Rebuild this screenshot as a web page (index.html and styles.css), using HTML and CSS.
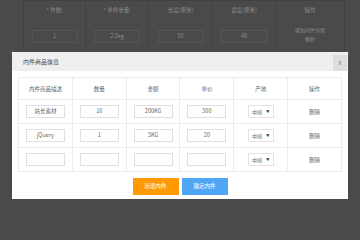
FILE: index.html
```html
<!DOCTYPE html>
<html lang="zh">
<head>
<meta charset="utf-8">
<title>内件商品信息</title>
<link rel="stylesheet" href="styles.css">
</head>
<body>
<div class="page">
  <div class="col"><div class="bh">* 件数:</div><div class="bin">1</div></div>
  <div class="col"><div class="bh">* 单件重量:</div><div class="bin">2.5kg</div></div>
  <div class="col"><div class="bh">长度(厘米)</div><div class="bin">50</div></div>
  <div class="col"><div class="bh">宽度(厘米)</div><div class="bin">40</div></div>
  <div class="col"><div class="bh">操作</div><div class="bops"><span>增加内件详情</span><span>删除</span></div></div>
</div>
<div class="mask-marks"><span>设</span><span>置</span></div>
<div class="dialog">
  <div class="dlg-title"><span>内件商品信息</span><span class="dlg-close">x</span></div>
  <div class="dlg-body">
    <table class="grid">
      <tr class="head"><td>内件商品描述</td><td>数量</td><td>金额</td><td>单价</td><td>产地</td><td>操作</td></tr>
      <tr><td><span class="box">站长素材</span></td><td><span class="box">10</span></td><td><span class="box">200KG</span></td><td><span class="box">500</span></td><td><span class="sel">中国<i>▼</i></span></td><td class="op">删除</td></tr>
      <tr><td><span class="box">jQuery</span></td><td><span class="box">1</span></td><td><span class="box">5KG</span></td><td><span class="box">20</span></td><td><span class="sel">中国<i>▼</i></span></td><td class="op">删除</td></tr>
      <tr><td><span class="box"></span></td><td><span class="box"></span></td><td><span class="box"></span></td><td><span class="box"></span></td><td><span class="sel">中国<i>▼</i></span></td><td class="op">删除</td></tr>
    </table>
    <div class="btns"><span class="btn orange">新增内件</span><span class="btn blue">确定内件</span></div>
  </div>
</div>
</body>
</html>
```
FILE: styles.css
```css
html, body {
  margin: 0;
  padding: 0;
}
body {
  width: 360px;
  height: 213px;
  overflow: hidden;
  position: relative;
  background: #4a4a4a;
  font-family: "Noto Sans CJK SC", "Liberation Sans", sans-serif;
}
.page {
  display: grid;
  grid-template-columns: 62px 63px 64px 63px 70px;
  margin-left: 23px;
  width: 323px;
  height: 50px;
  border-top: 1px solid #424242;
}
.col {
  border-left: 1px solid #424242;
  display: flex;
  flex-direction: column;
  align-items: center;
  padding-top: 6px;
}
.col:last-child {
  border-right: 1px solid #424242;
}
.bh {
  font-size: 5.5px;
  line-height: 7px;
  color: #8c8c8c;
}
.bin {
  margin-top: 16px;
  width: 44px;
  height: 11px;
  border: 1px solid #565656;
  font-size: 5.5px;
  line-height: 11px;
  text-align: center;
  color: #8c8c8c;
}
.bops {
  margin-top: 12px;
  display: flex;
  flex-direction: column;
  align-items: center;
  gap: 2px;
  font-size: 5px;
  line-height: 7px;
  color: #8c8c8c;
}
.mask-marks {
  display: flex;
  justify-content: space-between;
  padding: 0 10px;
  font-size: 4px;
  line-height: 4px;
  color: #6a6a6a;
}
.dialog {
  position: absolute;
  left: 12px;
  top: 52px;
  width: 336px;
  height: 147px;
  background: #fff;
  display: flex;
  flex-direction: column;
}
.dlg-title {
  height: 19px;
  background: #efefef;
  display: flex;
  justify-content: space-between;
  align-items: flex-end;
  padding-left: 11px;
  font-size: 6px;
  color: #444;
}
.dlg-title > span:first-child {
  line-height: 19px;
}
.dlg-close {
  width: 14px;
  height: 16px;
  margin-right: 1px;
  background: #dedede;
  color: #777;
  font-size: 6px;
  line-height: 16px;
  text-align: center;
}
.dlg-body {
  padding: 6px 6px 0;
}
.grid {
  width: 324px;
  border-collapse: collapse;
  table-layout: fixed;
}
.grid td {
  border: 1px solid #ececec;
  height: 23px;
  padding: 0;
  text-align: center;
  vertical-align: middle;
  font-size: 5.5px;
  color: #666;
}
.grid .head td {
  height: 21px;
}
.box {
  display: inline-block;
  box-sizing: border-box;
  width: 39px;
  height: 13px;
  border: 1px solid #e0e0e0;
  line-height: 11px;
  vertical-align: middle;
}
.sel {
  display: inline-flex;
  align-items: center;
  justify-content: center;
  gap: 4px;
  box-sizing: border-box;
  width: 26px;
  height: 13px;
  border: 1px solid #e3e3e3;
  vertical-align: middle;
  font-size: 5px;
}
.sel i {
  font-style: normal;
  font-size: 3.5px;
  color: #333;
}
.op {
  font-size: 5px;
}
.btns {
  display: flex;
  justify-content: center;
  gap: 3px;
  margin-top: 6px;
}
.btn {
  width: 46px;
  height: 17px;
  color: #fff;
  font-size: 5.5px;
  line-height: 17px;
  text-align: center;
}
.orange {
  background: #ff9a04;
}
.blue {
  background: #4ea6f5;
}
```
